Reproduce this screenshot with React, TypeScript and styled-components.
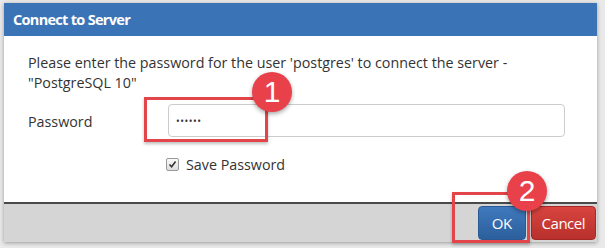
import React from 'react';
import styled, { createGlobalStyle } from 'styled-components';

const GlobalStyle = createGlobalStyle`
    html, body {
        margin: 0;
        padding: 0;
        background: #e9e9e9;
        font-family: 'Open Sans', 'Liberation Sans', sans-serif;
    }
`;

const Page = styled.div`
    position: relative;
    width: 605px;
    height: 248px;
    padding: 3px 8px 0 4px;
    box-sizing: border-box;
    overflow: hidden;
`;

const Dialog = styled.div`
    width: 593px;
    display: flex;
    flex-direction: column;
    background: #fff;
    box-shadow: 0 1px 4px rgba(0, 0, 0, 0.35);
`;

const Header = styled.div`
    height: 33px;
    background: #3b74b6;
    color: #fff;
    display: flex;
    align-items: center;
    padding-left: 9px;
    font-weight: 700;
    font-size: 14.5px;
    letter-spacing: -0.7px;
`;

const Body = styled.div`
    height: 166px;
    box-sizing: border-box;
    padding: 17px 32px 0 24px;
    color: #333;
    font-size: 14.3px;
`;

const Message = styled.p`
    margin: 0 0 11px;
    line-height: 20px;
`;

const FormRow = styled.div`
    display: flex;
    align-items: center;
`;

const Label = styled.label`
    width: 140px;
    flex-shrink: 0;
    padding-top: 2px;
`;

const Input = styled.div`
    flex: 1;
    height: 33px;
    box-sizing: border-box;
    border: 1px solid #ccc;
    border-radius: 4px;
    display: flex;
    align-items: center;
    padding-left: 7px;
    font-size: 10px;
    letter-spacing: 0.5px;
    color: #333;
`;

const CheckRow = styled.div`
    display: flex;
    align-items: center;
    gap: 7px;
    margin: 18px 0 0 138px;
`;

const Check = styled.span`
    width: 11px;
    height: 11px;
    border: 1px solid #999;
    border-radius: 2px;
    background: linear-gradient(#fafafa, #ddd);
    display: flex;
    align-items: center;
    justify-content: center;
`;

const Footer = styled.div`
    height: 38px;
    border-top: 2px solid #4a4a4a;
    background: #d5d5d5;
    display: flex;
    justify-content: flex-end;
    align-items: center;
    gap: 5px;
    padding-right: 1px;
`;

const Button = styled.button<{ $variant: 'primary' | 'danger' }>`
    height: 34px;
    border-radius: 4px;
    border: 1px solid ${(p) => (p.$variant === 'primary' ? '#2a5a94' : '#a52a27')};
    background: ${(p) =>
        p.$variant === 'primary'
            ? 'linear-gradient(#4079bd, #2c5f9c)'
            : 'linear-gradient(#d9443f, #b8302c)'};
    color: #fff;
    font-family: 'Open Sans', 'Liberation Sans', sans-serif;
    font-size: 15px;
    letter-spacing: -0.5px;
    padding: 0 ${(p) => (p.$variant === 'primary' ? '13px' : '10px')};
    cursor: pointer;
`;

const Highlight = styled.div`
    position: absolute;
    border: 3px solid #e2454a;
    box-shadow: 0 2px 3px rgba(0, 0, 0, 0.25);
`;

const Badge = styled.div`
    position: absolute;
    width: 40px;
    height: 40px;
    border-radius: 50%;
    background: #e8414a;
    color: #fff;
    font-family: 'Liberation Sans', sans-serif;
    font-size: 30px;
    display: flex;
    align-items: center;
    justify-content: center;
    box-shadow: 0 2px 4px rgba(0, 0, 0, 0.35);
`;

const App = () => {
    return (
        <>
            <GlobalStyle />
            <Page>
                <Dialog>
                    <Header>Connect to Server</Header>
                    <Body>
                        <Message>
                            Please enter the password for the user 'postgres' to connect the server -
                            <br />
                            "PostgreSQL 10"
                        </Message>
                        <FormRow>
                            <Label>Password</Label>
                            <Input>••••••</Input>
                        </FormRow>
                        <CheckRow>
                            <Check>
                                <svg width="9" height="9" viewBox="0 0 9 9">
                                    <path d="M1.5 4.5 L3.6 6.8 L7.6 1.6" fill="none" stroke="#333" strokeWidth="1.6" />
                                </svg>
                            </Check>
                            <span>Save Password</span>
                        </CheckRow>
                    </Body>
                    <Footer>
                        <Button $variant="primary">OK</Button>
                        <Button $variant="danger">Cancel</Button>
                    </Footer>
                </Dialog>
                <Highlight style={{ left: 144, top: 97, width: 118, height: 39 }} />
                <Badge style={{ left: 252, top: 72 }}>1</Badge>
                <Highlight style={{ left: 452, top: 192, width: 72, height: 45 }} />
                <Badge style={{ left: 507, top: 171 }}>2</Badge>
            </Page>
        </>
    );
};

export default App;
